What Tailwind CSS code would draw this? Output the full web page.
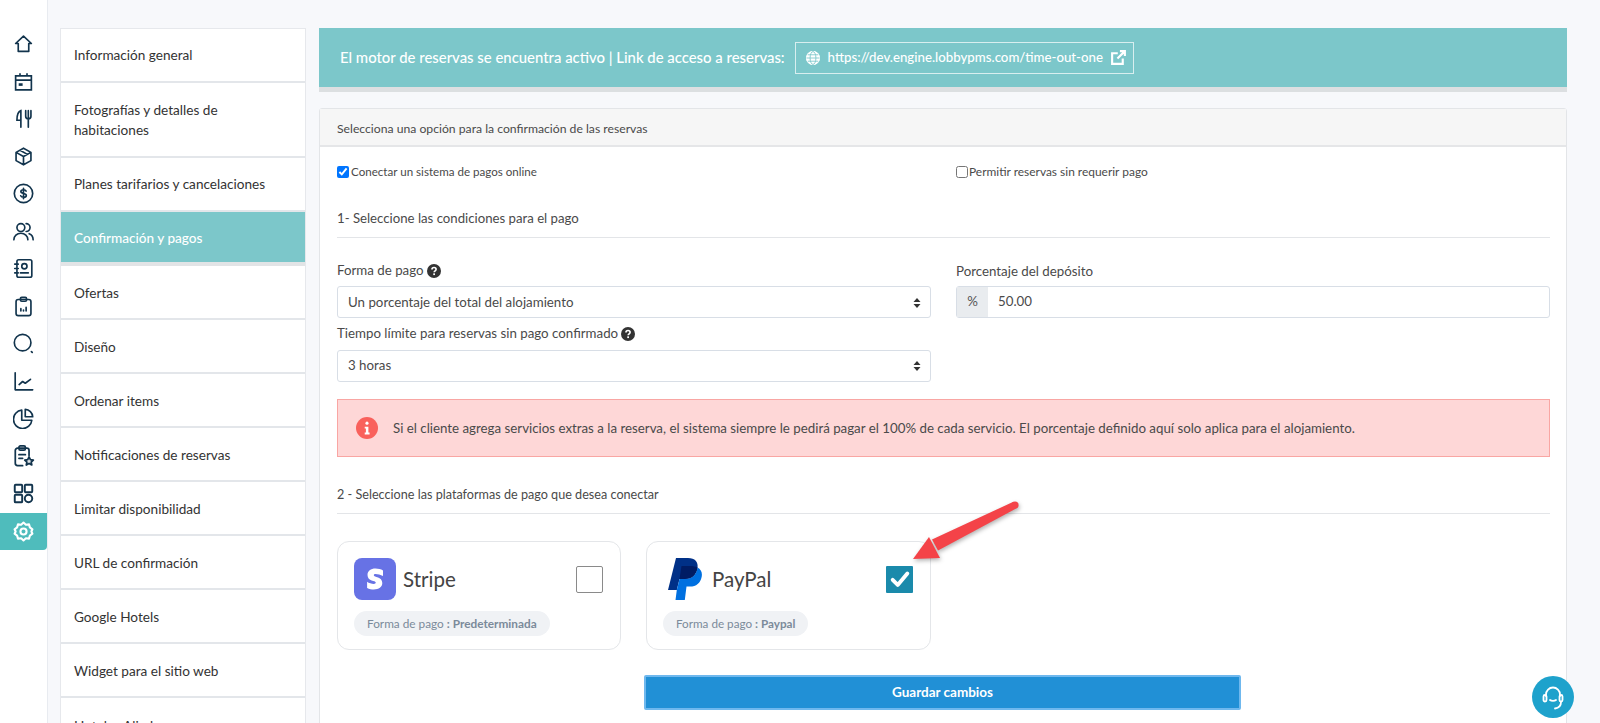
<!DOCTYPE html>
<html lang="es">
<head>
<meta charset="utf-8">
<title>Confirmación y pagos</title>
<script src="https://cdn.jsdelivr.net/npm/@tailwindcss/browser@4"></script>
</head>
<body class="h-screen overflow-hidden bg-[#f7f8fb] font-['Lato','Noto_Sans',sans-serif] text-[#3d3d3d]">
<div class="relative flex h-[723px] overflow-hidden">
  <!-- Icon rail -->
  <nav class="flex w-[48px] shrink-0 flex-col border-r border-[#e8ebf0] bg-white pt-[25px] text-[#12344d]">
    <a class="flex h-[37.5px] w-[46px] items-center justify-center"><svg class="h-[21px] w-[21px]" viewBox="0 0 24 24" fill="none" stroke="currentColor" stroke-width="1.9" stroke-linejoin="round"><path d="M3 12 12 3.500l9 8.500h-3v9H6v-9z"/></svg></a>
    <a class="flex h-[37.5px] w-[46px] items-center justify-center"><svg class="h-[21px] w-[21px]" viewBox="0 0 24 24" fill="none" stroke="currentColor" stroke-width="1.900"><path d="M3 5.500h18v16H3zM3 10.500h18M8 2.500v4M16 2.500v4"/><path d="M6.500 14h4.500v3H6.500z" fill="currentColor" stroke="none"/></svg></a>
    <a class="flex h-[37.5px] w-[46px] items-center justify-center"><svg class="h-[21px] w-[21px]" viewBox="0 0 24 24" fill="none" stroke="currentColor" stroke-width="1.900" stroke-linecap="round"><path d="M9 22V3C6 4 4.500 7 4.500 14H9M14.500 3v6.500a3 3 0 0 0 6 0V3M17.500 3v19"/></svg></a>
    <a class="flex h-[37.5px] w-[46px] items-center justify-center"><svg class="h-[21px] w-[21px]" viewBox="0 0 24 24" fill="none" stroke="currentColor" stroke-width="1.900" stroke-linejoin="round"><path d="M12 2.500l8.500 4.800v9.400L12 21.500l-8.500-4.800V7.300zM3.500 7.300 12 12l8.500-4.700M12 12v9.500M8 4.800l8.500 4.800"/></svg></a>
    <a class="flex h-[37.5px] w-[46px] items-center justify-center"><svg class="h-[21px] w-[21px]" viewBox="0 0 24 24" fill="none" stroke="currentColor" stroke-width="1.900" stroke-linecap="round"><circle cx="12" cy="12" r="10.500"/><path d="M15 9.200c-.5-1-1.600-1.500-3-1.500-1.700 0-3 .8-3 2.100 0 3 6.200 1.400 6.200 4.400 0 1.300-1.400 2.100-3.200 2.100-1.500 0-2.700-.6-3.200-1.700M12 6v12"/></svg></a>
    <a class="flex h-[37.5px] w-[46px] items-center justify-center"><svg class="h-[21px] w-[21px]" viewBox="0 0 24 24" fill="none" stroke="currentColor" stroke-width="1.900" stroke-linecap="round"><circle cx="9" cy="7.500" r="4.500"/><path d="M1 21.500c0-4.500 3.500-7.500 8-7.500s8 3 8 7.500M15 3a4.500 4.500 0 0 1 0 9M18.500 14.500c2.700 1 4.500 3.500 4.500 7"/></svg></a>
    <a class="flex h-[37.5px] w-[46px] items-center justify-center"><svg class="h-[21px] w-[21px]" viewBox="0 0 24 24" fill="none" stroke="currentColor" stroke-width="1.900" stroke-linecap="round"><rect x="4.500" y="2" width="17" height="20" rx="2"/><circle cx="13" cy="9.500" r="3"/><path d="M8.500 17h9M2 7h4M2 12h4M2 17h4"/></svg></a>
    <a class="flex h-[37.5px] w-[46px] items-center justify-center"><svg class="h-[21px] w-[21px]" viewBox="0 0 24 24" fill="none" stroke="currentColor" stroke-width="1.900" stroke-linecap="round"><rect x="3.500" y="4" width="17" height="18.500" rx="2.500"/><rect x="8.500" y="1.500" width="7" height="4.500" rx="1.500"/><path d="M9 17v-2.500M12 17v-1M15 17v-4"/></svg></a>
    <a class="flex h-[37.5px] w-[46px] items-center justify-center"><svg class="h-[21px] w-[21px]" viewBox="0 0 24 24" fill="none" stroke="currentColor" stroke-width="1.900" stroke-linecap="round"><circle cx="11" cy="11" r="9.500"/><path d="M21 21.200l1 1"/></svg></a>
    <a class="flex h-[37.5px] w-[46px] items-center justify-center"><svg class="h-[21px] w-[21px]" viewBox="0 0 24 24" fill="none" stroke="currentColor" stroke-width="1.900" stroke-linecap="round" stroke-linejoin="round"><path d="M2.500 2V21.500H22.500M7 15.500l4-3.500 3 2 6-4.500"/></svg></a>
    <a class="flex h-[37.5px] w-[46px] items-center justify-center"><svg class="h-[21px] w-[21px]" viewBox="0 0 24 24" fill="none" stroke="currentColor" stroke-width="1.900" stroke-linejoin="round"><path d="M10 2.500a10.500 10.500 0 1 0 11.500 11.500H10z"/><path d="M14 1.500A9 9 0 0 1 22.500 10H14z"/></svg></a>
    <a class="flex h-[37.5px] w-[46px] items-center justify-center"><svg class="ml-[2px] h-[22px] w-[22px]" viewBox="0 0 24 24" fill="none" stroke="currentColor" stroke-width="1.900" stroke-linecap="round" stroke-linejoin="round"><path d="M10.500 22.500H5A2.500 2.500 0 0 1 2.500 20V6A2.500 2.500 0 0 1 5 3.500h10A2.500 2.500 0 0 1 17.500 6v5.500"/><rect x="6.500" y="1" width="7" height="4.500" rx="1.500"/><path d="M6.500 10.500h7M6.500 14.500h4"/><path d="M17.500 13l1.500 3 3.200.4-2.400 2.200.7 3.200-3-1.700-3 1.700.7-3.200-2.400-2.200 3.200-.4z" fill="currentColor" fill-opacity=".15"/></svg></a>
    <a class="flex h-[37.5px] w-[46px] items-center justify-center"><svg class="h-[21px] w-[21px]" viewBox="0 0 24 24" fill="none" stroke="currentColor" stroke-width="2.200"><rect x="2" y="2" width="8.500" height="8.500" rx="1"/><rect x="13.500" y="2" width="8.500" height="8.500" rx="1"/><rect x="2" y="13.500" width="8.500" height="8.500" rx="1"/><circle cx="17.750" cy="17.750" r="4.250"/></svg></a>
    <a class="flex h-[37.5px] w-[47px] items-center justify-center rounded-br-[4px] bg-[#4fbcbc] pr-[1px] text-white"><svg class="h-[21px] w-[21px]" viewBox="0 0 24 24" fill="none" stroke="currentColor" stroke-width="2.400" stroke-linejoin="round"><path d="M12 1.800l2.700 2.400 3.600-.3 1 3.400 2.900 2.200L21 12l1.200 2.500-2.900 2.200-1 3.400-3.600-.3L12 22.200 9.300 19.800l-3.600.3-1-3.400-2.900-2.200L3 12 1.800 9.500l2.900-2.200 1-3.400 3.600.3z"/><circle cx="12" cy="12" r="3.500"/></svg></a>
  </nav>

  <div class="flex min-w-0 flex-1 items-start pt-[28px] pl-[12px]">
    <!-- Section menu -->
    <ul class="w-[246px] shrink-0 border-x border-t border-[#e6e8ec] bg-white text-[13.6px] leading-[20px] text-[#333]">
      <li class="flex h-[54px] items-center border-b-2 border-[#e3e6ea] px-[13px]">Información general</li>
      <li class="flex h-[75px] items-center border-b-2 border-[#e3e6ea] px-[13px]">Fotografías y detalles de habitaciones</li>
      <li class="flex h-[54px] items-center border-b-2 border-[#e3e6ea] px-[13px]">Planes tarifarios y cancelaciones</li>
      <li class="flex h-[54px] items-center border-b-4 border-[#e2e4e6] bg-[#7cc7ca] px-[13px] pt-[2px] font-medium text-white">Confirmación y pagos</li>
      <li class="flex h-[54px] items-center border-b-2 border-[#e3e6ea] px-[13px] pt-[2px]">Ofertas</li>
      <li class="flex h-[54px] items-center border-b-2 border-[#e3e6ea] px-[13px] pt-[2px]">Diseño</li>
      <li class="flex h-[54px] items-center border-b-2 border-[#e3e6ea] px-[13px] pt-[2px]">Ordenar items</li>
      <li class="flex h-[54px] items-center border-b-2 border-[#e3e6ea] px-[13px] pt-[2px]">Notificaciones de reservas</li>
      <li class="flex h-[54px] items-center border-b-2 border-[#e3e6ea] px-[13px] pt-[2px]">Limitar disponibilidad</li>
      <li class="flex h-[54px] items-center border-b-2 border-[#e3e6ea] px-[13px] pt-[2px]">URL de confirmación</li>
      <li class="flex h-[54px] items-center border-b-2 border-[#e3e6ea] px-[13px] pt-[2px]">Google Hotels</li>
      <li class="flex h-[54px] items-center border-b-2 border-[#e3e6ea] px-[13px] pt-[2px]">Widget para el sitio web</li>
      <li class="flex h-[54px] items-center px-[13px] pt-[2px]">Hoteles Aliados</li>
    </ul>

    <!-- Main column -->
    <main class="ml-[13px] w-[1248px] shrink-0">
      <div class="flex h-[64px] items-center gap-[10px] border-b-[5px] border-[#dcdfe1] bg-[#7cc7ca] pl-[21px] text-white">
        <span class="whitespace-nowrap text-[14.9px] font-medium">El motor de reservas se encuentra activo | Link de acceso a reservas:</span>
        <a class="flex h-[32px] w-[339px] items-center whitespace-nowrap border border-white/70 pl-[10px] text-[13.25px] font-medium">
          <svg class="mr-[8px] h-[14px] w-[14px]" viewBox="0 0 24 24" fill="#fff" stroke="#7cc7ca" stroke-width="1.500"><circle cx="12" cy="12" r="11.500" stroke="#fff"/><ellipse cx="12" cy="12" rx="5" ry="11"/><path d="M1 12h22M3 6.500h18M3 17.500h18"/></svg>
          https://dev.engine.lobbypms.com/time-out-one
          <svg class="ml-[7px] h-[17px] w-[17px]" viewBox="0 0 24 24" fill="none" stroke="currentColor" stroke-width="3"><path d="M18 13.500V21H3V6h8M14 3h7v7M21 3 10.500 13.500"/></svg>
        </a>
      </div>

      <section class="mt-[16px] h-[640px] rounded-t-[3px] border border-[#e3e5e8] bg-white">
        <header class="flex h-[38px] items-center border-b-2 border-[#e5e6e8] bg-[#f6f6f6] px-[17px] pt-[4px] text-[12.2px] text-[#4a4a4a]">Selecciona una opción para la confirmación de las reservas</header>
        <div class="pl-[17px] pr-[16px]">
          <div class="grid grid-cols-2 gap-x-[25px] pt-[16px] text-[#4a4a4a]">
            <label class="flex h-[17px] items-center gap-[1px] text-[11.6px]"><input type="checkbox" checked class="m-0 mr-[1px] h-[12px] w-[12px] accent-[#0075ff]">Conectar un sistema de pagos online</label>
            <label class="flex h-[17px] items-center text-[11.95px]"><input type="checkbox" class="m-0 mr-[1px] h-[12px] w-[12px]">Permitir reservas sin requerir pago</label>
          </div>
          <h3 class="mt-[28px] border-b border-[#e3e5e8] pb-[9px] text-[13.2px] leading-[20px] text-[#4a4a4a]">1- Seleccione las condiciones para el pago</h3>

          <div class="mt-[21px] grid grid-cols-2 gap-x-[25px] text-[13.3px] text-[#4a4a4a]">
            <div>
              <label class="flex h-[20px] items-center gap-[3px] pt-[3px]">Forma de pago
                <svg class="h-[14px] w-[14px] text-[#333]" viewBox="0 0 24 24"><circle cx="12" cy="12" r="12" fill="currentColor"/><path d="M8.500 9.500c0-2.200 1.600-3.500 3.600-3.500s3.500 1.200 3.500 3.100c0 2.700-3.300 2.500-3.300 5" fill="none" stroke="#fff" stroke-width="2.800"/><rect x="10.700" y="16" width="3" height="3" fill="#fff"/></svg>
              </label>
              <div class="mt-[7px] flex h-[32px] items-center justify-between rounded-[3px] border border-[#d8dee6] bg-white pl-[10px] pr-[9px] pt-[2px]">Un porcentaje del total del alojamiento
                <svg class="h-[10px] w-[8px]" viewBox="0 0 8 10" fill="#333"><path d="M4 0l3.500 4h-7zM4 10l3.500-4h-7z"/></svg>
              </div>
            </div>
            <div>
              <label class="flex h-[20px] items-center pt-[5px]">Porcentaje del depósito</label>
              <div class="mt-[7px] flex h-[32px] items-center rounded-[3px] border border-[#d8dee6] bg-white">
                <span class="flex h-full w-[31px] items-center justify-center bg-[#e9ecef] text-[#555]">%</span>
                <span class="pl-[10px]">50.00</span>
              </div>
            </div>
            <div class="mt-[6px]">
              <label class="flex h-[20px] items-center gap-[3px]">Tiempo límite para reservas sin pago confirmado
                <svg class="h-[14px] w-[14px] text-[#333]" viewBox="0 0 24 24"><circle cx="12" cy="12" r="12" fill="currentColor"/><path d="M8.500 9.500c0-2.200 1.600-3.500 3.600-3.500s3.500 1.200 3.500 3.100c0 2.700-3.300 2.500-3.300 5" fill="none" stroke="#fff" stroke-width="2.800"/><rect x="10.700" y="16" width="3" height="3" fill="#fff"/></svg>
              </label>
              <div class="mt-[6px] flex h-[32px] items-center justify-between rounded-[3px] border border-[#d8dee6] bg-white pl-[10px] pr-[9px]">3 horas
                <svg class="h-[10px] w-[8px]" viewBox="0 0 8 10" fill="#333"><path d="M4 0l3.500 4h-7zM4 10l3.500-4h-7z"/></svg>
              </div>
            </div>
          </div>

          <div class="mt-[17px] flex h-[58px] items-center border border-[#f9a6a3] bg-[#fed7d7] pl-[18px] text-[13.3px] text-[#4a4a4a]">
            <svg class="mr-[15px] h-[22px] w-[22px]" viewBox="0 0 24 24"><circle cx="12" cy="12" r="12" fill="#f9615c"/><rect x="10.300" y="5" width="3.400" height="3.400" rx="1.700" fill="#fff"/><path d="M9.500 10.500h4v6.500h1.300v2h-5.300v-2h1.300v-4.500H9.500z" fill="#fff"/></svg>
            <span class="pt-[2px]">Si el cliente agrega servicios extras a la reserva, el sistema siempre le pedirá pagar el 100% de cada servicio. El porcentaje definido aquí solo aplica para el alojamiento.</span>
          </div>

          <h3 class="mt-[28px] border-b border-[#e3e5e8] pb-[8px] text-[12.64px] leading-[20px] text-[#4a4a4a]">2 - Seleccione las plataformas de pago que desea conectar</h3>

          <div class="mt-[27px] flex gap-[25px]">
            <div class="h-[109px] w-[284px] rounded-[12px] border border-[#e4e6e9] bg-white pl-[16px] pr-[17px] pt-[16px]">
              <div class="flex h-[42px] items-center">
                <svg class="h-[42px] w-[42px]" viewBox="0 0 42 42"><rect width="42" height="42" rx="8" fill="#6772e5"/><path d="M29 12.500c-2-1.200-4.800-1.900-7.500-1.900-4.800 0-8 2.500-8 6.300 0 6.600 8.300 5.200 8.300 7.700 0 .9-.8 1.300-2 1.300-2.200 0-5-.9-6.700-2.200v6.300c2.100 1 4.600 1.500 6.700 1.500 5 0 8.500-2.400 8.500-6.400 0-7-8.500-5.500-8.500-7.900 0-.8.700-1.200 1.800-1.200 2 0 5.100.7 7.400 2z" fill="#fff"/></svg>
                <span class="ml-[7px] text-[20.5px] text-[#444]">Stripe</span>
                <span class="ml-auto h-[27px] w-[27px] rounded-[2px] border border-[#8a8a8a] bg-white"></span>
              </div>
              <div class="mt-[11px] inline-flex h-[25px] items-center rounded-full bg-[#f0f2f5] px-[13px] text-[11.8px] text-[#7b8a9a]">Forma de pago&nbsp;<b class="font-bold">: Predeterminada</b></div>
            </div>
            <div class="h-[109px] w-[285px] rounded-[12px] border border-[#e4e6e9] bg-white pl-[16px] pr-[17px] pt-[16px]">
              <div class="flex h-[42px] items-center">
                <svg class="ml-[4px] h-[42px] w-[35px]" viewBox="0 0 35 42"><path d="M9 0h12c7 0 10.500 4 9.500 10-1.300 7.300-6 11-13 11h-5L9.800 32H1z" fill="#003087"/><path d="M30.500 9.500c3.500 1.800 5 5 4.200 9.200-1.300 6.500-5.500 9.800-11.700 9.800h-3.500L17.800 42H8.500l1.300-10 2.700-11h5c7 0 11.700-3.700 13-11z" fill="#0070e0"/><path d="M12.500 21h5c7 0 11.700-3.700 13-11.500-2-1-4.500-1.500-7.500-1.500H14.500z" fill="#001c64"/></svg>
                <span class="ml-[10px] text-[20.5px] text-[#444]">PayPal</span>
                <span class="ml-auto flex h-[27px] w-[27px] items-center justify-center rounded-[1px] bg-[#1a8aab]">
                  <svg class="h-[22px] w-[22px]" viewBox="0 0 24 24" fill="none" stroke="#fff" stroke-width="4.200" stroke-linecap="round" stroke-linejoin="round"><path d="M4 13l5.500 5.500L20 6"/></svg>
                </span>
              </div>
              <div class="mt-[11px] inline-flex h-[25px] items-center rounded-full bg-[#f0f2f5] px-[13px] text-[11.7px] text-[#7b8a9a]">Forma de pago&nbsp;<b class="font-bold">: Paypal</b></div>
            </div>
          </div>

          <button class="mt-[25px] ml-[307px] flex h-[35px] w-[597px] items-center justify-center rounded-[2px] border-2 border-[#6fb8ee] bg-[#2190d6] text-[13.5px] font-bold text-white">Guardar cambios</button>
        </div>
      </section>
    </main>
  </div>

  <!-- Annotation arrow -->
  <svg class="absolute left-[900px] top-[495px] h-[75px] w-[125px] drop-shadow-[1px_2px_2px_rgba(0,0,0,.3)]" viewBox="0 0 125 75" fill="#f44348">
    <circle cx="115" cy="10" r="3.600"/>
    <path d="M113.400 6.800 116.600 13.200 38 55.500 32 44.500z"/>
    <path d="M13 64 29 42 40 63z"/>
  </svg>

  <!-- Support bubble -->
  <div class="absolute left-[1532px] top-[676px] flex h-[42px] w-[42px] items-center justify-center rounded-full bg-[#1ea2cc]">
    <svg class="h-[28px] w-[28px]" viewBox="0 0 28 28" fill="none" stroke="#fff" stroke-width="1.800" stroke-linecap="round"><path d="M7 13V11.500a7 7 0 0 1 14 0V13"/><rect x="4.500" y="12" width="3" height="6.500" rx="1.500"/><rect x="20.500" y="12" width="3" height="6.500" rx="1.500"/><path d="M11 17c1.500 1.200 4.500 1.200 6 0M22 19c0 3.500-2.500 6-6 6.500"/></svg>
  </div>
</div>
</body>
</html>
